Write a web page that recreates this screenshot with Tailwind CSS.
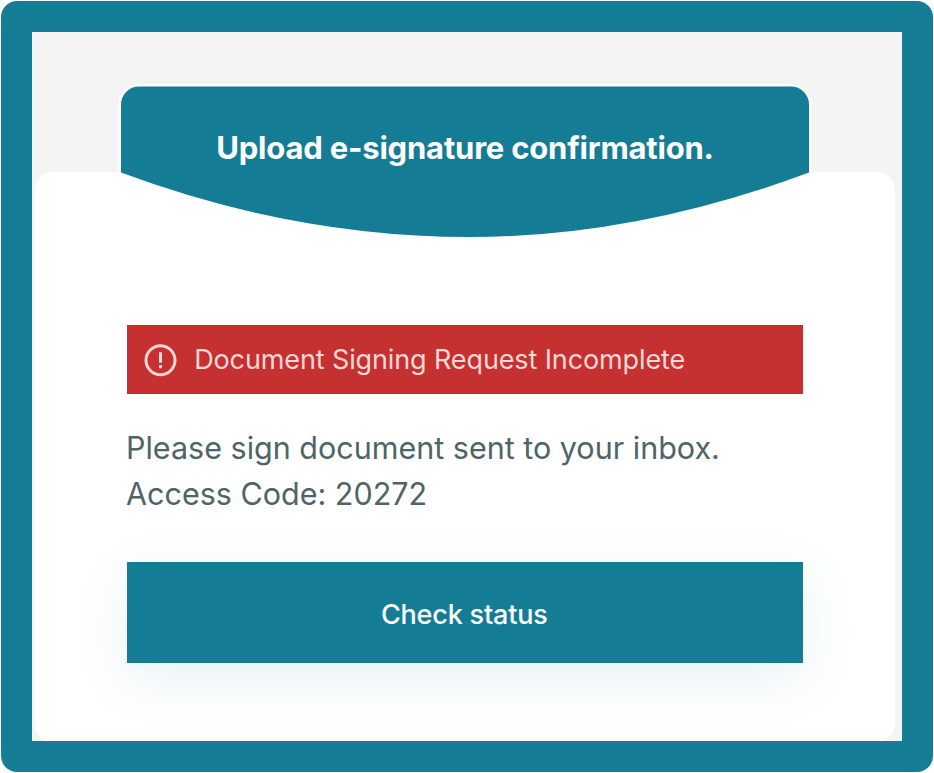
<!DOCTYPE html>
<html lang="en">
<head>
<meta charset="utf-8">
<title>Upload e-signature confirmation</title>
<script src="https://cdn.jsdelivr.net/npm/@tailwindcss/browser@4"></script>
</head>
<body class="h-[773px] w-[934px] overflow-hidden bg-white p-px font-['Inter',sans-serif]">
<main class="h-[771px] w-[932px] rounded-[16px] bg-[#167d96] p-[31px]">
  <div class="flex h-[709px] w-[870px] flex-col overflow-hidden bg-[#f4f4f4] pt-[54px] pl-[3px]">
    <header class="relative z-10 ml-[86px] h-[152px] w-[688px] shrink-0">
      <svg class="absolute inset-0 overflow-visible" width="688" height="152" viewBox="0 0 688 152" aria-hidden="true">
        <path d="M0 86V18.500A18 18 0 0 1 18 .5H670A18 18 0 0 1 688 18.500V86" fill="none" stroke="#fff" stroke-width="5"/>
        <path d="M0 86.500V18.500A18 18 0 0 1 18 .5H670A18 18 0 0 1 688 18.500V86.500Q515 151 350 151Q173 151 0 86.500Z" fill="#147d95"/>
      </svg>
      <h1 class="relative pt-[42px] text-center text-[31px] leading-[40px] font-bold tracking-[-0.2px] whitespace-nowrap text-white">Upload e-signature confirmation.</h1>
    </header>
    <section class="-mt-[66px] h-[570px] w-[860px] shrink-0 rounded-[18px] bg-white pt-[153px] pr-[92px] pl-[91.5px]">
      <div class="flex h-[69px] items-center gap-[17px] bg-[#c53030] pl-[17.7px] text-[#fed7d7]" role="alert">
        <svg class="shrink-0" width="33" height="34" viewBox="0 0 33 34" fill="none" stroke="currentColor" stroke-width="3" aria-hidden="true">
          <circle cx="16.5" cy="17.300" r="14.500"/>
          <path d="M16.500 9.200v10.500M16.500 22v3.200"/>
        </svg>
        <span class="pt-px text-[27px] leading-[36px] tracking-[-0.12px] whitespace-nowrap">Document Signing Request Incomplete</span>
      </div>
      <p class="mt-[31px] -ml-[0.5px] text-[30.5px] leading-[46px] whitespace-nowrap text-[#4f6467]">Please sign document sent to your inbox.<br>Access Code: 20272</p>
      <button class="mt-[45px] block h-[101px] w-full bg-[#147d95] pt-[5px] pr-px text-[27px] font-medium tracking-[-0.2px] text-white shadow-[0_16px_54px_rgba(22,125,150,0.1)]">Check status</button>
    </section>
  </div>
</main>
</body>
</html>
